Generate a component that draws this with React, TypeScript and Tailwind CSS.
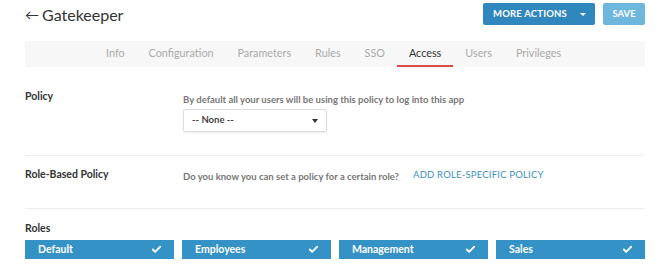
import { Check } from "lucide-react";

const tabs = ["Info", "Configuration", "Parameters", "Rules", "SSO", "Access", "Users", "Privileges"];
const roles = ["Default", "Employees", "Management", "Sales"];

export default function App() {
  return (
    <div className="w-[670px] h-[280px] bg-white px-[25px] font-['Lato',sans-serif] text-[#333] overflow-hidden">
      <div className="flex justify-between items-start h-[41px] pt-[3px]">
        <h1 className="flex items-center gap-[3px] text-[16px] leading-[22px] text-[#333] pt-[1px]">
          <span className="text-[14px]">←</span>
          <span>Gatekeeper</span>
        </h1>
        <div className="flex gap-[8px]">
          <button className="h-[22px] w-[112px] bg-[#2f87bd] rounded-[2px] text-white text-[9.5px] font-bold tracking-[0.2px] flex items-center pl-[10px] pr-[9px] justify-between">
            <span>MORE ACTIONS</span>
            <span className="w-0 h-0 border-l-[3px] border-r-[3px] border-t-[3px] border-l-transparent border-r-transparent border-t-white"></span>
          </button>
          <button className="h-[22px] w-[42px] bg-[#6db7df] rounded-[2px] text-white text-[9.5px] font-bold">
            SAVE
          </button>
        </div>
      </div>

      <div className="h-[26px] bg-[#f7f7f7] flex pl-[69px]">
        {tabs.map((t) => (
          <div
            key={t}
            className={
              t === "Access"
                ? "px-[12px] flex items-center text-[10.8px] text-[#333] border-b-2 border-[#d6504a]"
                : "px-[12px] flex items-center text-[10.8px] text-[#aaa] border-b-2 border-transparent"
            }
          >
            {t}
          </div>
        ))}
      </div>

      <div className="flex pt-[22px] pb-[23px] border-b border-[#ececec]">
        <div className="w-[158px] text-[10.5px] font-bold leading-[14px]">Policy</div>
        <div className="flex flex-col">
          <p className="text-[9.5px] font-bold text-[#777] leading-[12px] mt-[5px]">
            By default all your users will be using this policy to log into this app
          </p>
          <div className="mt-[3px] w-[144px] h-[23px] border border-[#ddd] rounded-[2px] shadow-[0_1px_2px_rgba(0,0,0,0.08)] flex items-center justify-between px-[8px]">
            <span className="text-[9.5px] font-bold text-[#444]">-- None --</span>
            <span className="w-0 h-0 border-l-[3px] border-r-[3px] border-t-[4px] border-l-transparent border-r-transparent border-t-[#333]"></span>
          </div>
        </div>
      </div>

      <div className="flex items-start pt-[11px] h-[53px] border-b border-[#ececec]">
        <div className="w-[158px] text-[10.5px] font-bold leading-[14px]">Role-Based Policy</div>
        <p className="text-[9.5px] font-bold text-[#777] leading-[12px] mt-[4px]">
          Do you know you can set a policy for a certain role?
        </p>
        <a className="ml-[14px] text-[9.5px] text-[#3a8fc0] leading-[12px] mt-[2px] tracking-[0.2px]">
          ADD ROLE-SPECIFIC POLICY
        </a>
      </div>

      <div className="pt-[12px]">
        <div className="text-[10.5px] font-bold leading-[14px]">Roles</div>
        <div className="flex gap-[8px] mt-[5px]">
          {roles.map((r) => (
            <div
              key={r}
              className="w-[149px] h-[19px] bg-[#3592c7] flex items-center justify-between pl-[13px] pr-[12px] text-white text-[10.5px] font-bold"
            >
              <span>{r}</span>
              <Check size={11} strokeWidth={4} />
            </div>
          ))}
        </div>
      </div>
    </div>
  );
}
